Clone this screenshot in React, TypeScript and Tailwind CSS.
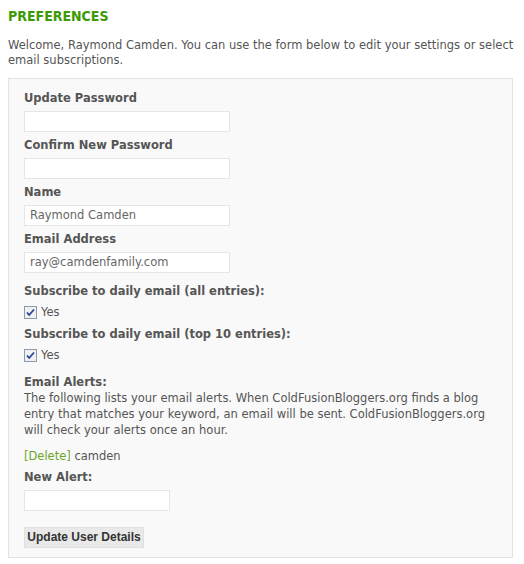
import React from "react";

function Check() {
  return (
    <span className="inline-flex w-[13px] h-[13px] border border-[#8c9cb0] bg-[#f0f0f0] items-center justify-center">
      <svg width="11" height="11" viewBox="0 0 11 11">
        <path d="M2 5.5 L4.2 8 L9 2.5" fill="none" stroke="#2a3f9e" strokeWidth="1.8" />
      </svg>
    </span>
  );
}

const Label = ({ children, cls = "" }: { children: React.ReactNode; cls?: string }) => (
  <div className={"font-bold leading-[16px] text-[#555] " + cls}>{children}</div>
);

const Input = ({ value = "", w = "w-[206px]", cls = "" }: { value?: string; w?: string; cls?: string }) => (
  <div className={"h-[21px] border border-[#e6e6e6] bg-white px-[5px] leading-[19px] text-[#666] " + w + " " + cls}>{value}</div>
);

export default function App() {
  return (
    <div className="w-[524px] h-[564px] bg-white px-[8px] pt-[8px] text-[11.5px] text-[#555]" style={{ fontFamily: '"DejaVu Sans", Verdana, sans-serif' }}>
      <h1
        className="text-[14px] font-bold text-[#3d9a05] leading-[16px]"
        style={{ fontFamily: '"DejaVu Sans Condensed", "DejaVu Sans", sans-serif' }}
      >
        PREFERENCES
      </h1>
      <p className="mt-[14px] leading-[15px]">
        Welcome, Raymond Camden. You can use the form below to edit your settings or select email subscriptions.
      </p>
      <div className="mt-[10px] w-[505px] border border-[#e2e2e2] bg-[#f9f9f9] pl-[15px] pr-[15px] pt-[11px] pb-[9px]">
        <Label>Update Password</Label>
        <Input cls="mt-[5px]" />
        <Label cls="mt-[5px]">Confirm New Password</Label>
        <Input cls="mt-[5px]" />
        <Label cls="mt-[5px]">Name</Label>
        <Input cls="mt-[5px]" value="Raymond Camden" />
        <Label cls="mt-[5px]">Email Address</Label>
        <Input cls="mt-[5px]" value="ray@camdenfamily.com" />
        <Label cls="mt-[10px]">Subscribe to daily email (all entries):</Label>
        <div className="mt-[5px] flex items-center gap-[4px] leading-[16px]">
          <Check />
          <span>Yes</span>
        </div>
        <Label cls="mt-[6px]">Subscribe to daily email (top 10 entries):</Label>
        <div className="mt-[5px] flex items-center gap-[4px] leading-[16px]">
          <Check />
          <span>Yes</span>
        </div>
        <Label cls="mt-[11px]">Email Alerts:</Label>
        <p className="leading-[16px]">
          The following lists your email alerts. When ColdFusionBloggers.org finds a blog entry that matches your keyword, an email will be sent. ColdFusionBloggers.org will check your alerts once an hour.
        </p>
        <div className="mt-[10px] leading-[16px]">
          <span className="text-[#6ea52d]">[Delete]</span> camden
        </div>
        <Label cls="mt-[5px]">New Alert:</Label>
        <Input cls="mt-[5px]" w="w-[146px]" />
        <button
          className="mt-[16px] h-[21px] w-[120px] px-0 bg-[#e9e9e9] border border-[#e0e0e0] text-[12px] font-bold text-[#333] leading-[19px]"
          style={{ fontFamily: '"Liberation Sans", Arial, sans-serif' }}
        >
          Update User Details
        </button>
      </div>
    </div>
  );
}
